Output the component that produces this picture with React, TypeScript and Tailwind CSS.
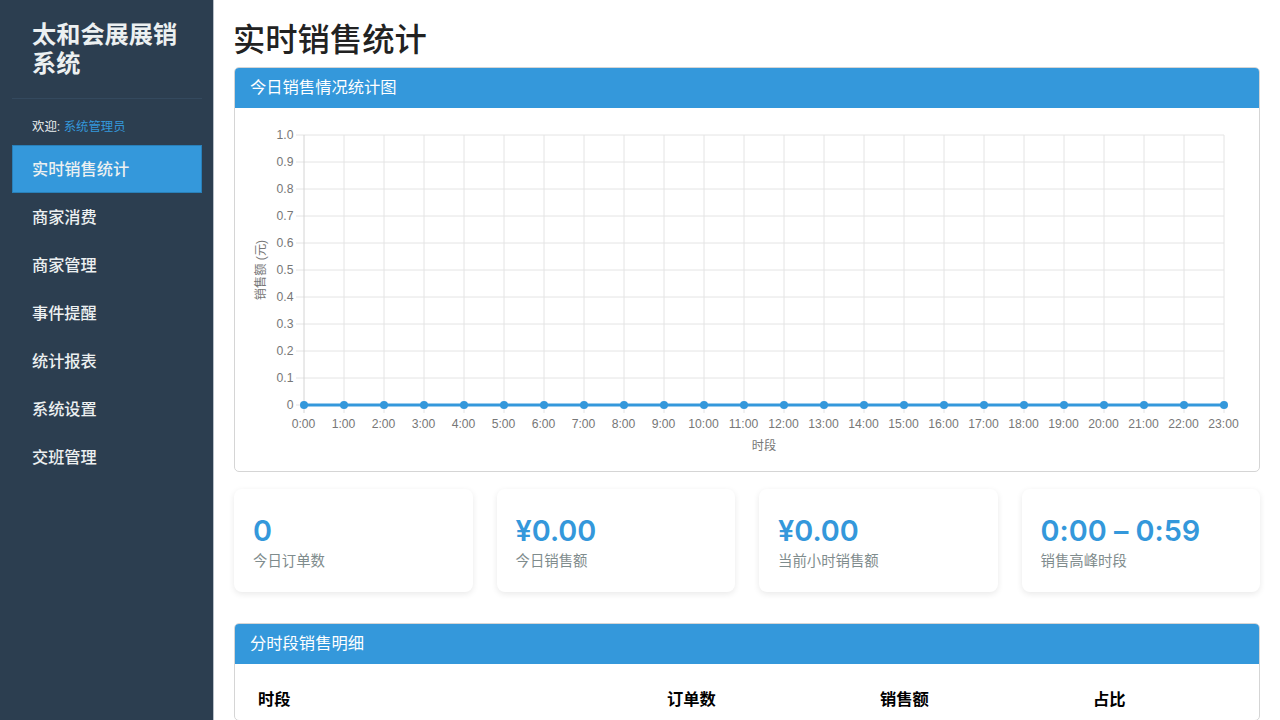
const FONT = "font-['Liberation_Sans','Noto_Sans_CJK_SC',sans-serif]";

const navItems = ["实时销售统计", "商家消费", "商家管理", "事件提醒", "统计报表", "系统设置", "交班管理"];

const stats = [
  { value: "0", label: "今日订单数" },
  { value: "¥0.00", label: "今日销售额" },
  { value: "¥0.00", label: "当前小时销售额" },
  { value: "0:00 – 0:59", label: "销售高峰时段" },
];

const hours = Array.from({ length: 24 }, (_, i) => i);
const ticks = [1.0, 0.9, 0.8, 0.7, 0.6, 0.5, 0.4, 0.3, 0.2, 0.1, 0];

function SalesChart() {
  // plot area in svg coords, svg starts at page (235, 108)
  const left = 69;
  const right = 989;
  const top = 27;
  const bottom = 297;
  const stepX = (right - left) / 23;
  const stepY = (bottom - top) / 10;
  const x = (i: number) => left + i * stepX;
  const y = (i: number) => top + i * stepY;
  const label = "fill-[#777777] text-[12.2px] font-['Liberation_Sans','Noto_Sans_CJK_SC',sans-serif]";

  return (
    <svg width="1024" height="363" viewBox="0 0 1024 363" className="block">
      {ticks.map((t, i) => (
        <line key={t} x1={left - 8} x2={right} y1={y(i)} y2={y(i)} stroke="#e4e4e4" strokeWidth="1" />
      ))}
      {hours.map((h) => (
        <line key={h} x1={x(h)} x2={x(h)} y1={top} y2={bottom + 8} stroke={h === 0 ? "#d4d4d4" : "#e4e4e4"} strokeWidth="1" />
      ))}
      {ticks.map((t, i) => (
        <text key={t} x={left - 10.5} y={y(i) + 4} textAnchor="end" className={label}>
          {t === 0 ? "0" : t.toFixed(1)}
        </text>
      ))}
      {hours.map((h) => (
        <text key={h} x={x(h) - 0.5} y={319.5} textAnchor="middle" className={label}>
          {h}:00
        </text>
      ))}
      <text x={529} y={341.5} textAnchor="middle" className={label}>
        时段
      </text>
      <text transform="translate(30 162) rotate(-90)" textAnchor="middle" className={label}>
        销售额 (元)
      </text>
      <line x1={left} x2={right} y1={bottom} y2={bottom} stroke="#3498db" strokeWidth="3" />
      {hours.map((h) => (
        <circle key={h} cx={x(h)} cy={bottom} r="4" fill="#3498db" />
      ))}
    </svg>
  );
}

function Card({ title, children }: { title: string; children: React.ReactNode }) {
  return (
    <section className="overflow-hidden rounded-[5px] border border-[#d5d5d5] bg-white">
      <h2 className="h-10 bg-[#3498db] pl-[15px] text-[16.3px] leading-[39px] font-normal text-white">{title}</h2>
      {children}
    </section>
  );
}

export default function App() {
  return (
    <div className={`flex h-screen overflow-hidden bg-white ${FONT}`}>
      <aside className="h-full w-[214px] shrink-0 border-r border-[#b8c0c8] bg-[#2c3e50] pr-[11px] pl-3 text-[#ecf0f1]">
        <div className="border-b border-[#34495e] px-5 pt-[20px] pb-[20px]">
          <h1 className="text-[24.2px] leading-[29px] font-semibold">太和会展展销系统</h1>
        </div>
        <p className="mt-[21px] mb-[10px] px-5 text-[12.4px] leading-[15px]">
          欢迎: <span className="text-[#3498db]">系统管理员</span>
        </p>
        <nav>
          {navItems.map((item, i) => (
            <a
              key={item}
              className={`block h-12 border px-[19px] text-[16.2px] leading-[47px] font-medium ${
                i === 0 ? "border-[#2980b9] bg-[#3498db] text-[#ecf0f1]" : "border-transparent"
              }`}
            >
              {item}
            </a>
          ))}
        </nav>
      </aside>

      <main className="min-w-0 flex-1 px-5 pt-[21px]">
        <h1 className="mb-[7px] -ml-px text-[32.3px] leading-[39px] font-medium text-[#222222]">实时销售统计</h1>

        <Card title="今日销售情况统计图">
          <SalesChart />
        </Card>

        <div className="mt-[17px] grid grid-cols-4 gap-6">
          {stats.map((s) => (
            <div key={s.label} className="h-[103px] rounded-lg bg-white pt-[24px] pr-5 pl-[19px] shadow-[0_2px_6px_rgba(0,0,0,0.09)]">
              <div className="font-['Inter','Noto_Sans_CJK_SC',sans-serif] text-[28.8px] leading-9 font-semibold text-[#3498db] [font-feature-settings:'calt'_0]">
                {s.value}
              </div>
              <div className="mt-[2px] text-[14.4px] leading-[21px] text-[#7f8c8d]">{s.label}</div>
            </div>
          ))}
        </div>

        <div className="mt-[31px]">
          <Card title="分时段销售明细">
            <div className="px-[15px] pt-[15px]">
              <table className="w-full table-fixed text-left text-[16.3px] text-black">
                <thead>
                  <tr className="h-[41px]">
                    <th className="w-[409px] pl-2 font-bold">时段</th>
                    <th className="w-[213px] pl-2 font-bold">订单数</th>
                    <th className="w-[213px] pl-2 font-bold">销售额</th>
                    <th className="pl-2 font-bold">占比</th>
                  </tr>
                </thead>
              </table>
            </div>
          </Card>
        </div>
      </main>
    </div>
  );
}
